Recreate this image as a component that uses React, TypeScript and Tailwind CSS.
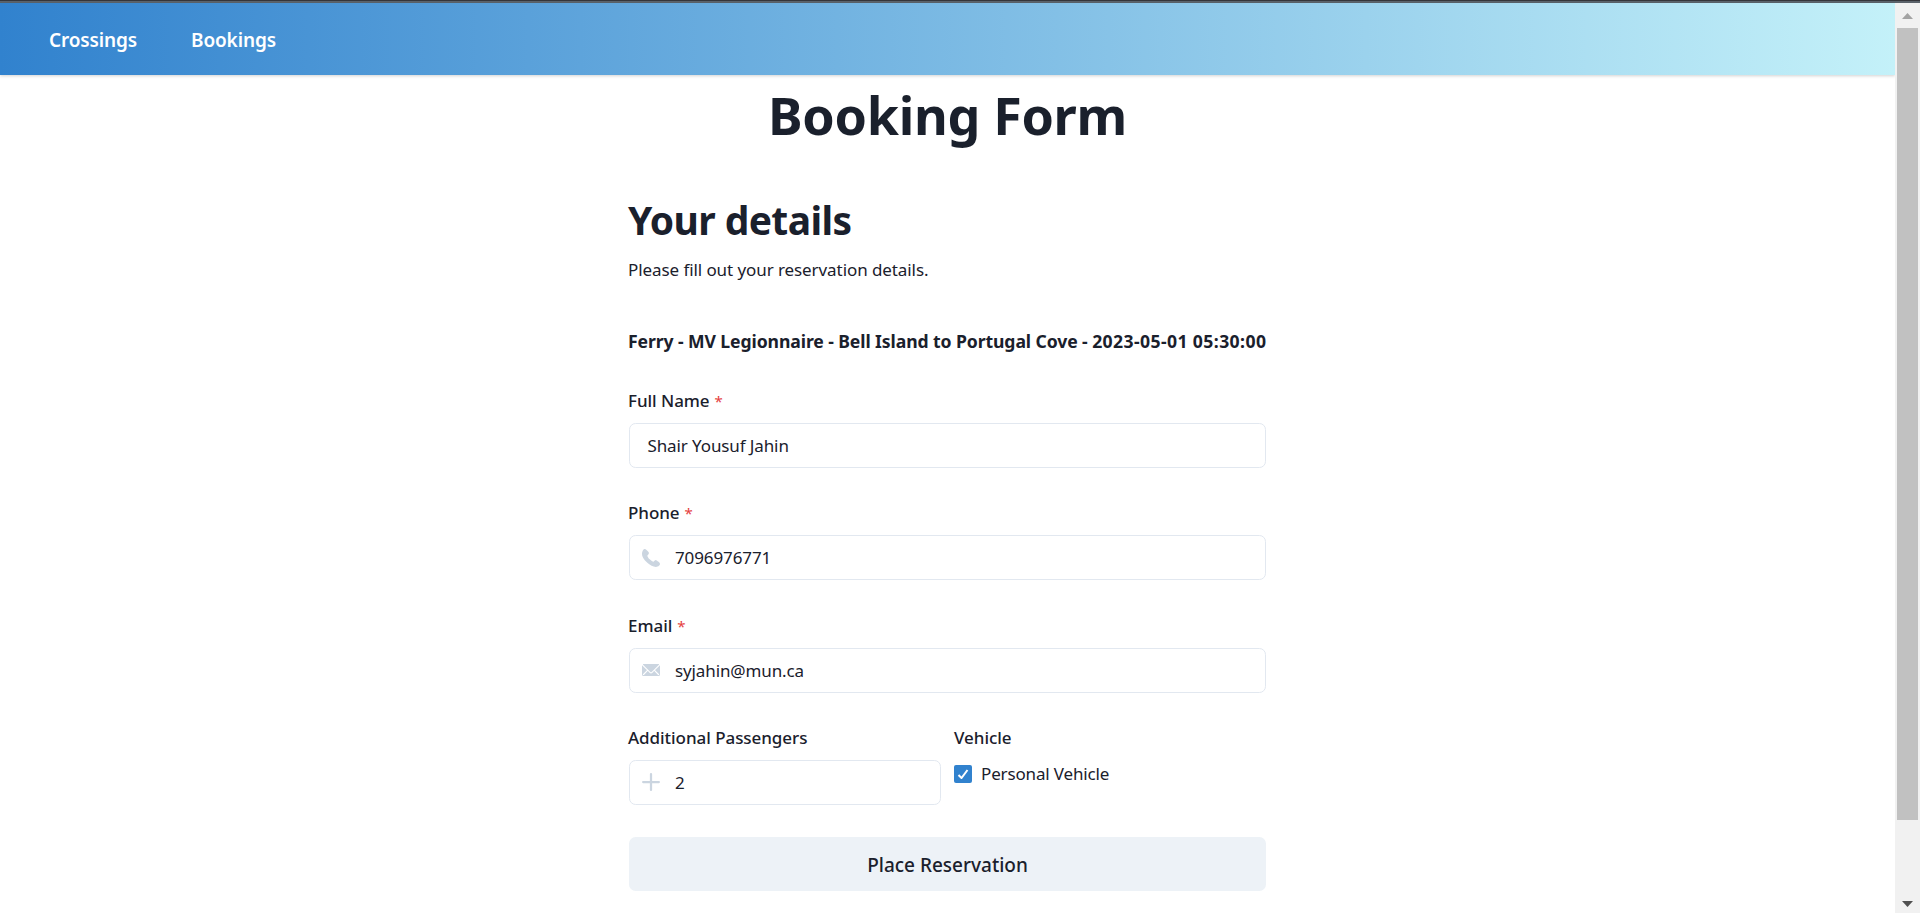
import type { ReactNode } from "react";

function PhoneIcon() {
  return (
    <svg viewBox="0 0 14 14" className="size-[18px]" fill="currentColor">
      <path d="M2.20731,0.0127209 C2.1105,-0.0066419 1.99432,-0.00664663 1.91687,0.032079 C0.871279,0.438698 0.212942,1.92964 0.0580392,2.95587 C-0.426031,6.28627 2.20731,9.17133 4.62766,11.0689 C6.77694,12.7534 10.9012,15.5223 13.3409,12.8503 C13.6507,12.5211 14.0186,12.037 13.9993,11.553 C13.9412,10.7397 13.186,10.1588 12.6051,9.71349 C12.1598,9.38432 11.2304,8.47427 10.6495,8.49363 C10.1267,8.51299 9.79754,9.05515 9.46837,9.38432 L8.88748,9.96521 C8.79067,10.062 7.55145,9.24878 7.41591,9.15197 C6.91248,8.8228 6.4284,8.45491 6.00242,8.04829 C5.57644,7.64167 5.18919,7.19632 4.86002,6.73161 C4.7632,6.59607 3.96933,5.41495 4.04678,5.31813 C4.04678,5.31813 4.72448,4.58234 4.91811,4.2919 C5.32473,3.67229 5.63453,3.18822 5.16982,2.45243 C4.99556,2.18135 4.78257,1.96836 4.55021,1.73601 C4.14359,1.34875 3.73698,0.942131 3.27227,0.612963 C3.02055,0.419335 2.59457,0.0708094 2.20731,0.0127209 Z" />
    </svg>
  );
}

function EmailIcon() {
  return (
    <svg viewBox="0 0 24 24" className="size-[18px]" fill="currentColor">
      <path d="M11.114,14.556a1.252,1.252,0,0,0,1.768,0L22.568,4.87a.5.5,0,0,0-.281-.849A1.966,1.966,0,0,0,22,4H2a1.966,1.966,0,0,0-.289.021.5.5,0,0,0-.281.849Z" />
      <path d="M23.888,5.832a.182.182,0,0,0-.2.039l-6.2,6.2a.251.251,0,0,0,0,.354l5.043,5.043a.75.75,0,1,1-1.06,1.061l-5.043-5.043a.25.25,0,0,0-.354,0l-2.129,2.129a2.75,2.75,0,0,1-3.888,0L7.926,13.488a.251.251,0,0,0-.354,0L2.529,18.531a.75.75,0,0,1-1.06-1.061l5.043-5.043a.251.251,0,0,0,0-.354l-6.2-6.2a.18.18,0,0,0-.2-.039A.182.182,0,0,0,0,6V18a2,2,0,0,0,2,2H22a2,2,0,0,0,2-2V6A.181.181,0,0,0,23.888,5.832Z" />
    </svg>
  );
}

function AddIcon() {
  return (
    <svg viewBox="0 0 24 24" className="size-[18px]" fill="currentColor">
      <path d="M0,12a1.5,1.5,0,0,0,1.5,1.5h8.75a.25.25,0,0,1,.25.25V22.5a1.5,1.5,0,0,0,3,0V13.75a.25.25,0,0,1,.25-.25H22.5a1.5,1.5,0,0,0,0-3H13.75a.25.25,0,0,1-.25-.25V1.5a1.5,1.5,0,0,0-3,0v8.75a.25.25,0,0,1-.25.25H1.5A1.5,1.5,0,0,0,0,12Z" />
    </svg>
  );
}

function Field({ label, required, icon, children }: { label: string; required?: boolean; icon?: ReactNode; children: ReactNode }) {
  return (
    <div className="flex flex-col gap-[9px]">
      <div className="-ml-px h-[26px] text-[17px] leading-[26px] font-medium tracking-[-0.05px]">
        {label}
        {required && <span className="ml-[5px] text-[15px] font-normal text-[#e53e3e]">*</span>}
      </div>
      <div className="flex h-[45px] items-center rounded-[6.6px] border border-[#e2e8f0]">
        {icon ? <span className="flex w-[45px] justify-center pr-[3px] text-[#cbd5e0]">{icon}</span> : <span className="w-[17.5px]" />}
        <span className="pt-px text-[17px] leading-[26px] tracking-[-0.11px]">{children}</span>
      </div>
    </div>
  );
}

export default function App() {
  return (
    <div className="flex h-[913px] w-full flex-col overflow-hidden bg-white font-['Noto_Sans',sans-serif] text-[#1a202c]">
      <div className="h-[3px] shrink-0 border-t border-[#34353a] bg-[#5b636b]" />
      <div className="flex min-h-0 flex-1">
        <div className="flex min-w-0 flex-1 flex-col">
          <nav className="flex h-[72px] shrink-0 items-center gap-[54px] bg-[linear-gradient(to_right,#3182ce,#c4f1f9)] pt-[2px] pl-[49px] text-[19px] font-semibold tracking-[-0.13px] text-white shadow-[0_1px_3px_rgba(0,0,0,0.18)]">
            <a>Crossings</a>
            <a>Bookings</a>
          </nav>
          <main className="mx-auto flex w-[637px] flex-col">
            <h1 className="mt-[10px] text-center text-[52px] leading-[60px] font-bold tracking-[-0.3px]">Booking Form</h1>
            <h2 className="mt-[51px] -ml-px text-[39px] leading-[48px] font-bold tracking-[-0.62px]">Your details</h2>
            <p className="mt-[13px] -ml-px text-[17px] leading-[26px] tracking-[-0.08px]">Please fill out your reservation details.</p>
            <p className="mt-[45px] -ml-px text-[17.6px] leading-[26px] font-bold tracking-[-0.09px] whitespace-nowrap">
              Ferry - MV Legionnaire - Bell Island to Portugal Cove - <span className="tracking-[0.4px]">2023-05-01 05:30:00</span>
            </p>
            <form className="mt-[34px] flex flex-col gap-[32.3px]">
              <Field label="Full Name" required>Shair Yousuf Jahin</Field>
              <Field label="Phone" required icon={<PhoneIcon />}>7096976771</Field>
              <Field label="Email" required icon={<EmailIcon />}>syjahin@mun.ca</Field>
              <div className="grid grid-cols-2 gap-[13px]">
                <Field label="Additional Passengers" icon={<AddIcon />}>2</Field>
                <div className="flex flex-col gap-[10px]">
                  <div className="h-[26px] text-[17px] leading-[26px] font-medium tracking-[-0.05px]">Vehicle</div>
                  <label className="flex h-[26px] items-center gap-[9px]">
                    <span className="flex size-[18px] items-center justify-center rounded-[2px] bg-[#3182ce]">
                      <svg viewBox="0 0 12 10" className="w-[12px]" fill="none" stroke="#fff" strokeWidth="2">
                        <polyline points="1.5 6 4.5 9 10.5 1" />
                      </svg>
                    </span>
                    <span className="text-[17px] leading-[26px] tracking-[-0.15px]">Personal Vehicle</span>
                  </label>
                </div>
              </div>
              <button type="button" className="h-[54px] rounded-[6.6px] bg-[#edf2f7] pt-[3px] text-[19px] font-medium">
                Place Reservation
              </button>
            </form>
          </main>
        </div>
        <div className="flex w-[25px] shrink-0 flex-col items-center justify-between bg-[#f1f1f1] pt-[10px] pb-[6px]">
          <svg viewBox="0 0 11 6" className="h-[6px] w-[11px] shrink-0" fill="#a3a3a3"><path d="M0 6 5.5 0 11 6Z" /></svg>
          <div className="mt-[9px] mb-auto h-[792px] w-[21px] shrink-0 bg-[#c1c1c1]" />
          <svg viewBox="0 0 11 6" className="h-[6px] w-[11px] shrink-0" fill="#505050"><path d="M0 0H11L5.5 6Z" /></svg>
        </div>
      </div>
    </div>
  );
}
